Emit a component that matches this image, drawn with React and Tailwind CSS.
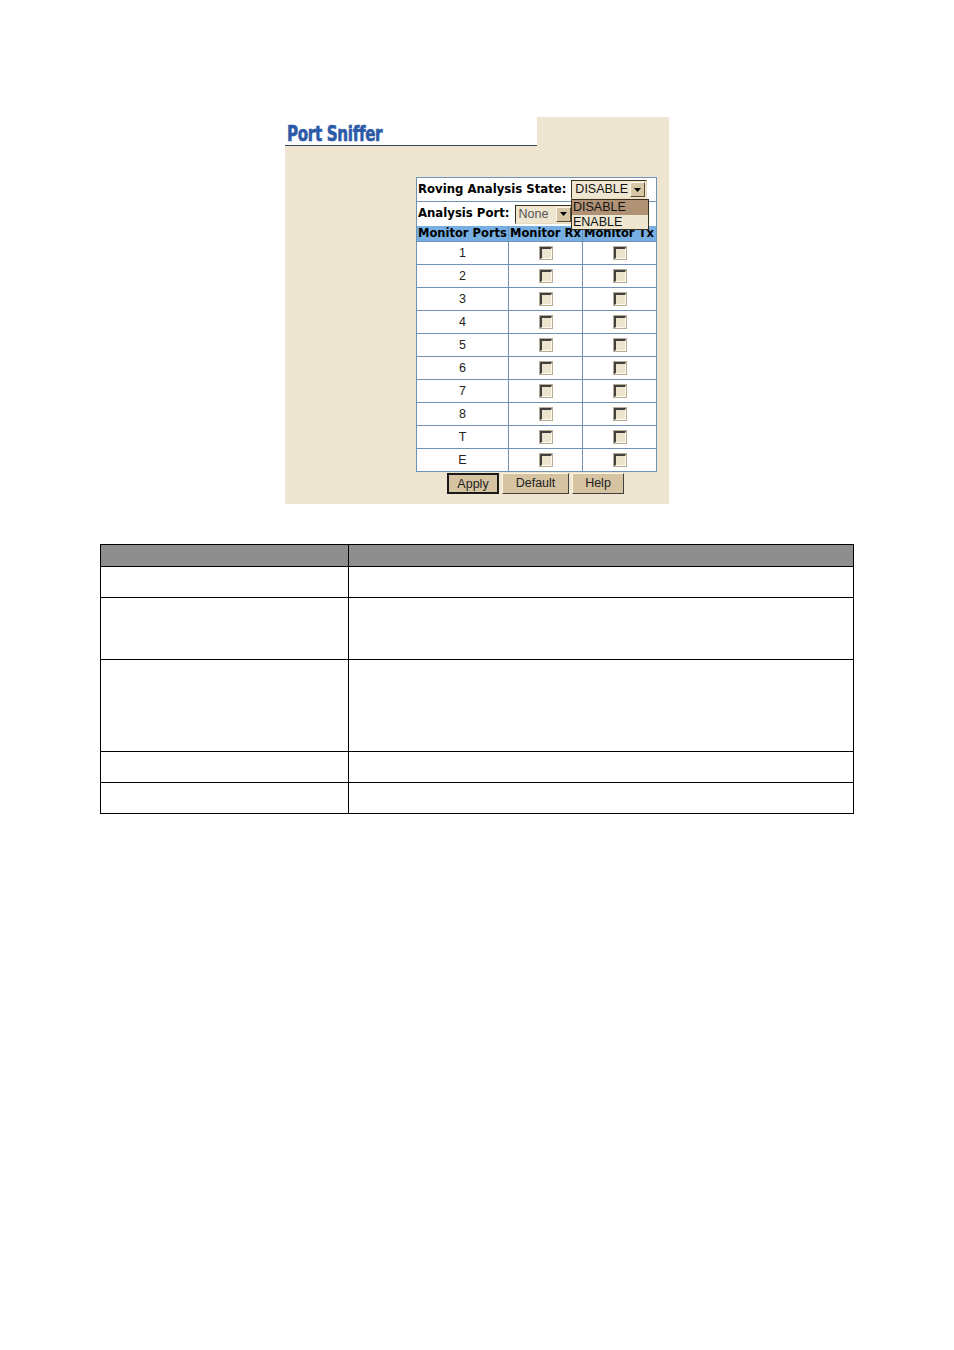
import React from "react";

const rows = ["1", "2", "3", "4", "5", "6", "7", "8", "T", "E"];

function Checkbox() {
  return (
    <div className="w-[12px] h-[12px] bg-[#ece4cc] border-t-[2px] border-l-[2px] border-t-[#404040] border-l-[#404040] border-r border-b border-r-[#fffaf0] border-b-[#fffaf0] shadow-[0_0_0_1px_#b8ad94]" />
  );
}

function Arrow() {
  return (
    <div className="w-[15px] h-[15px] bg-[#d6c6a6] border border-[#fff8e8] border-r-[#5a4a30] border-b-[#5a4a30] flex items-center justify-center">
      <svg width="7" height="4" viewBox="0 0 7 4">
        <polygon points="0,0 7,0 3.5,4" fill="#000" />
      </svg>
    </div>
  );
}

export default function App() {
  const sans = { fontFamily: '"Liberation Sans", Arial, sans-serif' };
  const verdana = { fontFamily: '"DejaVu Sans", Verdana, sans-serif' };
  return (
    <div className="w-[954px] h-[1350px] bg-white flex flex-col">
      <div className="ml-[285px] mt-[117px] w-[384px] h-[387px] bg-[#eee6d1] flex flex-col">
        <div className="w-[252px] h-[29px] bg-white flex items-end pl-[2px] border-b border-[#33475e]">
          <span
            className="text-[#2c5aa7] text-[21px] leading-[21px] font-bold tracking-[-0.4px] inline-block origin-left scale-x-[0.8] [-webkit-text-stroke:0.6px_#2c5aa7]"
            style={{ fontFamily: '"DejaVu Sans Condensed", "DejaVu Sans", sans-serif' }}
          >
            Port Sniffer
          </span>
        </div>
        <div className="ml-[131px] mt-[31px] w-[241px] border border-[#6f93b6] bg-white relative">
          <div className="h-[24px] flex items-center pl-[1px] border-b border-[#6f93b6]">
            <span className="text-[11.7px] font-bold text-black" style={verdana}>
              Roving Analysis State:
            </span>
            <div className="ml-[5px] w-[76px] h-[19px] bg-[#eee6d1] border border-[#3a3020] border-r-[#e8dcc0] border-b-[#e8dcc0] flex items-center justify-between pl-[3px] pr-[1px]">
              <span className="text-[12.5px] leading-none text-[#111]" style={sans}>DISABLE</span>
              <Arrow />
            </div>
          </div>
          <div className="h-[24px] flex items-center pl-[1px]">
            <span className="text-[11.7px] font-bold text-black" style={verdana}>
              Analysis Port:
            </span>
            <div className="ml-[5px] w-[58px] h-[19px] bg-[#eee6d1] border border-[#3a3020] border-r-[#e8dcc0] border-b-[#e8dcc0] flex items-center justify-between pl-[3px] pr-[1px]">
              <span className="text-[12.5px] leading-none text-[#555]" style={sans}>None</span>
              <Arrow />
            </div>
          </div>
          <div className="absolute left-[154px] top-[21px] w-[78px] h-[31px] bg-[#eee6d1] border border-[#3a3020] flex flex-col z-10">
            <div className="h-[15px] bg-[#b09274] text-[12.5px] leading-[15px] pl-[1px] text-[#111]" style={sans}>DISABLE</div>
            <div className="h-[14px] text-[12.5px] leading-[14px] pl-[1px] text-[#111]" style={sans}>ENABLE</div>
          </div>
          <div className="grid grid-cols-[92px_74px_73px] h-[15px] bg-[#77afe2]">
            <div className="text-[11.5px] font-bold leading-[15px] pl-[1px] border-r border-[#6f93b6] whitespace-nowrap overflow-hidden" style={verdana}>Monitor Ports</div>
            <div className="text-[11.5px] font-bold leading-[15px] pl-[1px] border-r border-[#6f93b6] whitespace-nowrap overflow-hidden" style={verdana}>Monitor Rx</div>
            <div className="text-[11.5px] font-bold leading-[15px] pl-[1px] whitespace-nowrap overflow-hidden" style={verdana}>Monitor Tx</div>
          </div>
          {rows.map((r) => (
            <div key={r} className="grid grid-cols-[92px_74px_73px] h-[23px] border-t border-[#6f93b6]">
              <div className="flex items-center justify-center border-r border-[#6f93b6] text-[12.5px] text-[#222]" style={sans}>{r}</div>
              <div className="flex items-center justify-center border-r border-[#6f93b6]"><Checkbox /></div>
              <div className="flex items-center justify-center"><Checkbox /></div>
            </div>
          ))}
        </div>
        <div className="ml-[162px] mt-[1px] flex gap-[3px]">
          <button className="w-[52px] h-[21px] bg-[#d5c3a1] border-[2px] border-[#1a1a1a] text-[12.5px] text-[#222]" style={sans}>Apply</button>
          <button className="w-[67px] h-[21px] bg-[#d5c3a1] border border-[#fff4e0] border-r-[#404040] border-b-[#404040] text-[12.5px] text-[#222]" style={sans}>Default</button>
          <button className="w-[52px] h-[21px] bg-[#d5c3a1] border border-[#fff4e0] border-r-[#404040] border-b-[#404040] text-[12.5px] text-[#222]" style={sans}>Help</button>
        </div>
      </div>
      <div className="ml-[100px] mt-[40px] w-[754px] border-[1.5px] border-black">
        {[21, 31, 62, 92, 31, 31].map((h, i) => (
          <div
            key={i}
            className={`grid grid-cols-[248px_1fr] ${i > 0 ? "border-t-[1.5px] border-black" : ""} ${i === 0 ? "bg-[#8e8e8e]" : "bg-white"}`}
            style={{ height: h }}
          >
            <div className="border-r-[1.5px] border-black" />
            <div />
          </div>
        ))}
      </div>
    </div>
  );
}
